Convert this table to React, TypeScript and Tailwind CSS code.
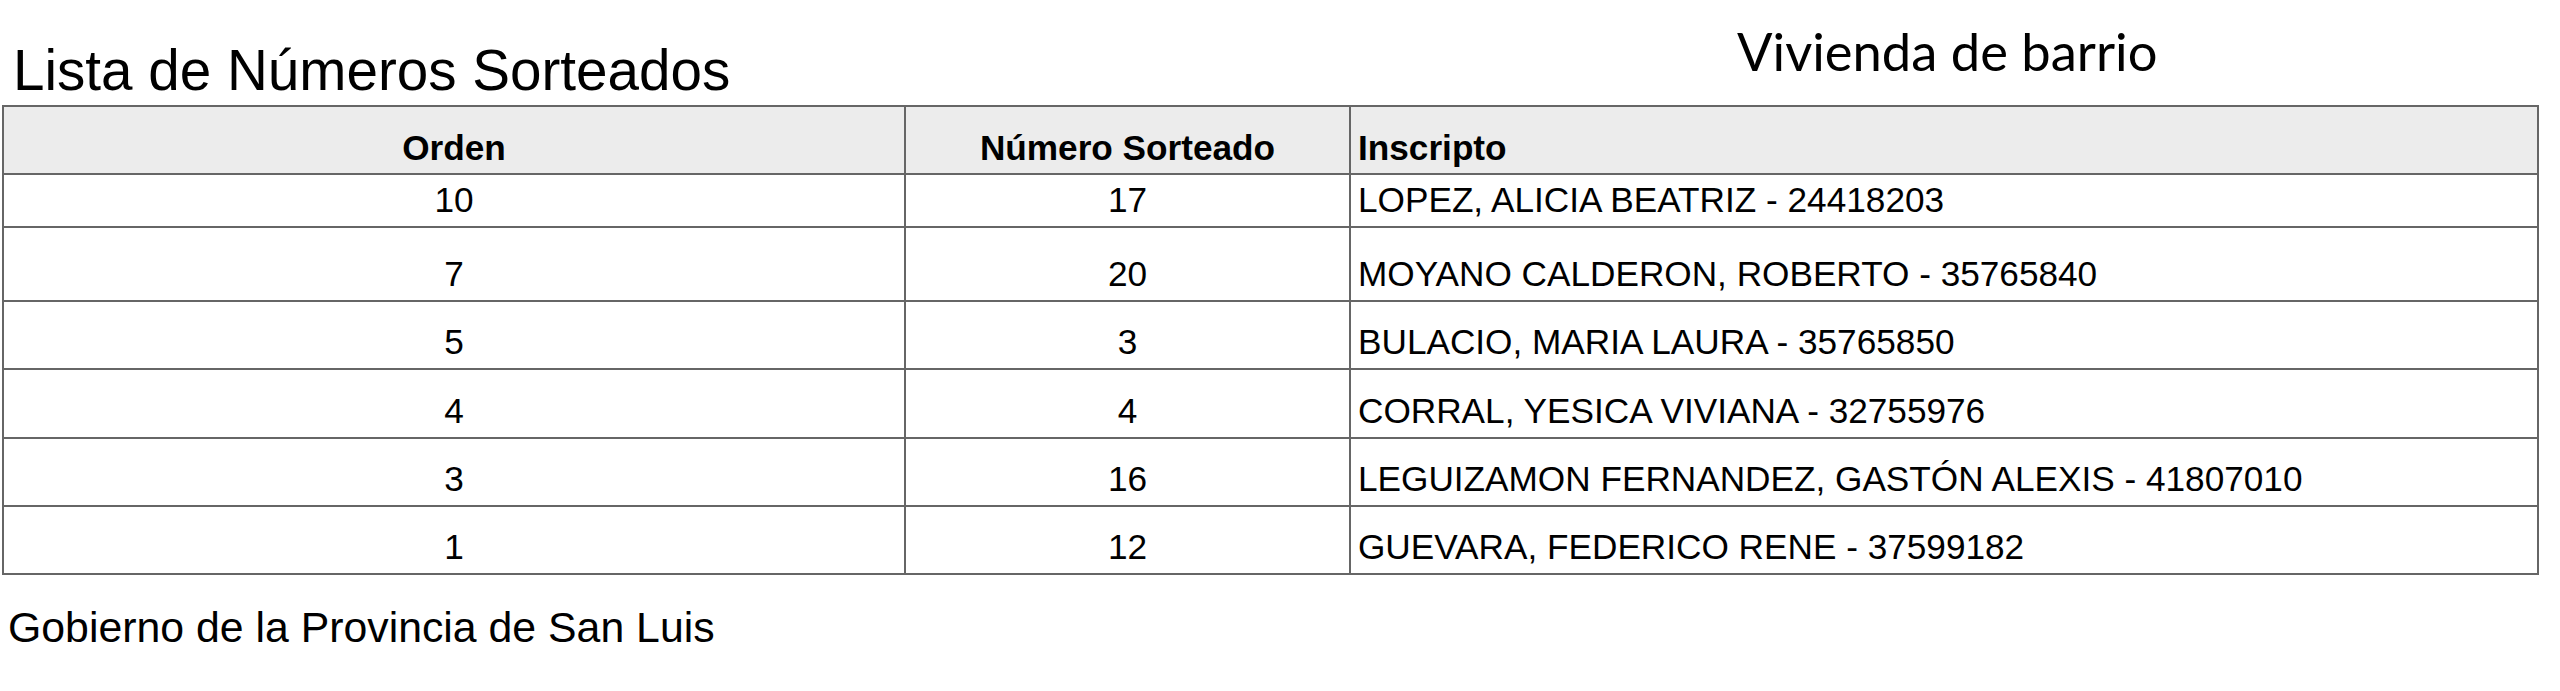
import React from "react";

const rows = [
  { orden: "10", numero: "17", inscripto: "LOPEZ, ALICIA BEATRIZ - 24418203", h: "h-[53px]" },
  { orden: "7", numero: "20", inscripto: "MOYANO CALDERON, ROBERTO - 35765840", h: "h-[74px]" },
  { orden: "5", numero: "3", inscripto: "BULACIO, MARIA LAURA - 35765850", h: "h-[68px]" },
  { orden: "4", numero: "4", inscripto: "CORRAL, YESICA VIVIANA - 32755976", h: "h-[69px]" },
  { orden: "3", numero: "16", inscripto: "LEGUIZAMON FERNANDEZ, GASTÓN ALEXIS - 41807010", h: "h-[68px]" },
  { orden: "1", numero: "12", inscripto: "GUEVARA, FEDERICO RENE - 37599182", h: "h-[68px]" },
];

export default function App() {
  return (
    <div className="w-[2560px] h-[691px] bg-white text-black font-['Liberation_Sans',Arial,sans-serif]">
      <div className="grid grid-cols-[1737px_1fr] h-[105px]">
        <div className="pl-[13px] pt-[43px] text-[56.6px] leading-none">Lista de Números Sorteados</div>
        <div className="pt-[25px] text-[52.5px] leading-none font-['Lato',sans-serif]">Vivienda de barrio</div>
      </div>

      <div className="ml-[2px] w-[2537px] border-2 border-[#666666] text-[35.2px] leading-none">
        <div className="flex h-[66px] bg-[#ececec] font-bold">
          <div className="w-[902px] border-r-2 border-[#666666] flex items-end justify-center pb-[8px]">Orden</div>
          <div className="w-[445px] border-r-2 border-[#666666] flex items-end justify-center pb-[8px]">Número Sorteado</div>
          <div className="flex-1 flex items-end pl-[7px] pb-[8px]">Inscripto</div>
        </div>
        {rows.map((r) => (
          <div key={r.orden} className={`flex border-t-2 border-[#666666] ${r.h}`}>
            <div className="w-[902px] border-r-2 border-[#666666] flex items-end justify-center pb-[9px]">{r.orden}</div>
            <div className="w-[445px] border-r-2 border-[#666666] flex items-end justify-center pb-[9px]">{r.numero}</div>
            <div className="flex-1 flex items-end pl-[7px] pb-[9px]">{r.inscripto}</div>
          </div>
        ))}
      </div>

      <div className="mt-[31px] pl-[8px] text-[42.8px] leading-none">Gobierno de la Provincia de San Luis</div>
    </div>
  );
}
